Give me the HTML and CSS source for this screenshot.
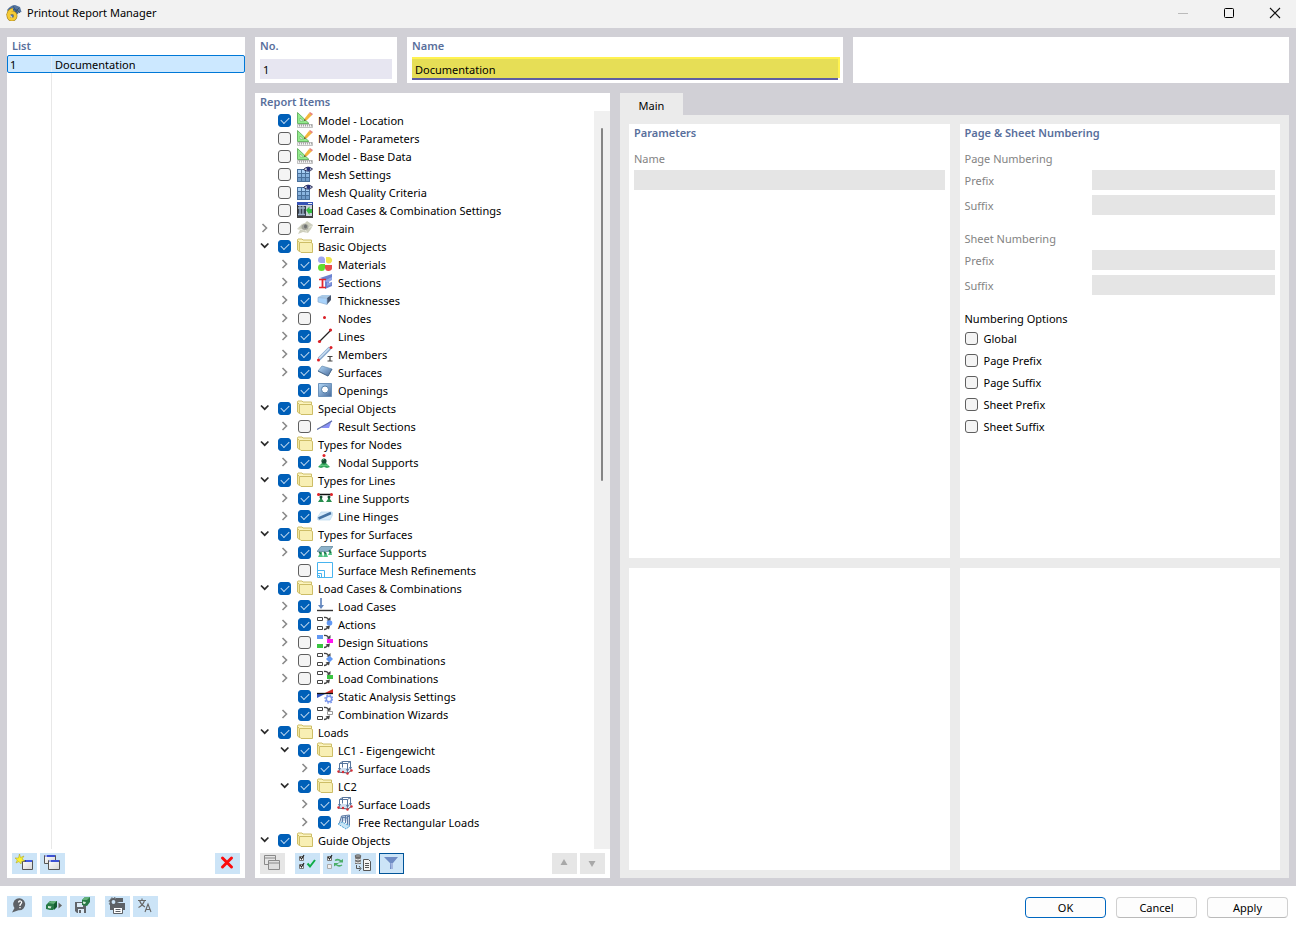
FILE: index.html
```html
<!DOCTYPE html>
<html lang="en">
<head>
<meta charset="UTF-8">
<meta name="viewport" content="width=device-width, initial-scale=1.0">
<title>Printout Report Manager</title>
<link rel="stylesheet" href="styles.css">
</head>
<body>

<!-- icon library -->
<svg class="sprite" aria-hidden="true">
  <defs>
    <linearGradient id="g-blue" x1="0" y1="0" x2="1" y2="1">
      <stop offset="0" stop-color="#b5dbfb"/><stop offset="1" stop-color="#46699a"/>
    </linearGradient>
    <linearGradient id="g-window" x1="0" y1="0" x2="1" y2="1">
      <stop offset="0" stop-color="#ffffff"/><stop offset="1" stop-color="#d4d4d4"/>
    </linearGradient>
  </defs>
  <symbol id="chevron-right" viewBox="0 0 10 10"><path d="M2.500 1l4 4-4 4" fill="none" stroke="#8a8a8a" stroke-width="1.600"/></symbol>
  <symbol id="chevron-down" viewBox="0 0 10 10"><path d="M1 2.500l3.700 3.700 3.700-3.700" fill="none" stroke="#2b2b2b" stroke-width="1.700"/></symbol>
  <symbol id="folder" viewBox="0 0 16 16">
    <path d="M2 4L.500 2.500V1.500L1 1h4l1 1h8.500V12" fill="#fbf3bd" stroke="#cdbd66"/>
    <path d="M2.500 4.500H14l1.500 1V14.500H4L2.500 13z" fill="#f8efb4" stroke="#cdbd66"/>
    <path d="M.500 2.500l2 2V13.500L.500 12z" fill="#f3e79f" stroke="#cdbd66"/>
  </symbol>
  <symbol id="model" viewBox="0 0 16 16">
    <path d="M.500.500L12 11.500H.500z" fill="#93ec8d" stroke="#6cb568"/>
    <path d="M3 6l3.500 3H3z" fill="#fff" stroke="#6cb568" stroke-width=".7"/>
    <path d="M7 9l1-3 4-5 3 2-5 5z" fill="#f3b73c"/><path d="M12 1l1-1 3 2-1.200 1.500z" fill="#e8837c"/><path d="M7 9l.6-2 1.400 1.200z" fill="#333"/>
    <path d="M.500 12.500h15v3H.500z" fill="#f2f2f2" stroke="#aaa" stroke-width=".7"/>
    <path d="M2.500 12.500v2m2-2v2m2-2v2m2-2v2m2-2v2m2-2v2m2-2v2" stroke="#888" stroke-width=".7"/>
  </symbol>
  <symbol id="mesh" viewBox="0 0 16 16">
    <path d="M0 3h13v13H0z" fill="#49709b"/>
    <path d="M1 4h3v3H1zM5 4h3v3H5zM9 4h3v3H9z" fill="#a9d0f5"/><path d="M1 8h3v3H1zM5 8h3v3H5zM9 8h3v3H9z" fill="#8ab5e0"/><path d="M1 12h3v3H1zM5 12h3v3H5zM9 12h3v3H9z" fill="#6f9bc9"/>
    <path d="M6.500 3.500Q11-1 15.500 3Q12 7 6.500 3.500z" fill="#dbe6f2" stroke="#2a2d55"/>
    <circle cx="11.500" cy="3" r="2" fill="#26317a"/>
  </symbol>
  <symbol id="lc-settings" viewBox="0 0 16 16">
    <path d="M.500.500h15v15H.500z" fill="#c9d0d8" stroke="#333"/><path d="M0 0h16v3H0z" fill="#3552b5"/><path d="M11 1h4v1h-4z" fill="#eee"/>
    <path d="M1 4h8v10H1z" fill="#37424f"/><path d="M3 4v9M6 4v9M1 12.500h7M1 6h7" stroke="#9fb4cb" stroke-width="1.300"/>
    <path d="M9 8l3.500-3.500V7H15v4h-2.500v2z" fill="#35bc41"/><path d="M0 14h16v2H0z" fill="#444"/>
  </symbol>
  <symbol id="terrain" viewBox="0 0 16 16">
    <path d="M0 9l5-5 3-1 2-2 6 4-2 4-3 4-5-1-5 2 2-4z" fill="#cdcebd"/><path d="M1 9l6 1 8-4M5 4l5 9" fill="none" stroke="#e7e7dc"/>
    <ellipse cx="8" cy="7" rx="3.500" ry="3" fill="#a3a49b"/><ellipse cx="8.500" cy="6.500" rx="1.500" ry="2" fill="#6e7070"/>
  </symbol>
  <symbol id="materials" viewBox="0 0 16 16">
    <path d="M1 4a3.600 3.600 0 0 1 7-1v4H4a3 3 0 0 1-3-3z" fill="#9fa7ee"/><path d="M9 1h3a3.300 3.300 0 1 1-3 5z" fill="#efe34d"/>
    <circle cx="4.500" cy="11.500" r="3.500" fill="#62dc2c"/><path d="M4 8h4v4H4z" fill="#62dc2c"/><path d="M8 9h7v2a3.500 3.500 0 0 1-7 1z" fill="#e94c4c"/>
  </symbol>
  <symbol id="sections" viewBox="0 0 16 16">
    <path d="M3 4l12-4v4l-3 1v4l3-1v4L8 15V6z" fill="#6c83d1"/><path d="M7 7l8-4v3l-5 3v3l5-2" fill="#91a5e4"/>
    <path d="M2 5.500h7M2 13.500h7" stroke="#e3262d" stroke-width="1.600"/><path d="M5.500 5v8" stroke="#e3262d" stroke-width="1.800"/>
  </symbol>
  <symbol id="thicknesses" viewBox="0 0 16 16">
    <path d="M1 5l4-2h9l-4 3H1z" fill="#a9c9e6"/><path d="M1 5.500l9 1v6L1 10z" fill="#a8d2fa"/><path d="M10 6l4-3v5l-4 4.500z" fill="#46566f"/><path d="M1 5.500l9 1v6L1 10z" fill="none" stroke="#8fb0d3" stroke-width=".7"/>
  </symbol>
  <symbol id="nodes" viewBox="0 0 16 16"><circle cx="7.500" cy="7.500" r="1.500" fill="#d91f26"/></symbol>
  <symbol id="lines" viewBox="0 0 16 16"><path d="M2 14L14 2" stroke="#222" stroke-width="1.300"/><circle cx="2.500" cy="13.500" r="1.600" fill="#dc1e25"/><circle cx="13.500" cy="2" r="1.600" fill="#dc1e25"/></symbol>
  <symbol id="members" viewBox="0 0 16 16">
    <path d="M2 13L13 2" stroke="#87a8cd" stroke-width="3.500"/><path d="M2 12.500L12.500 2" stroke="#cbdff2" stroke-width="1.500"/>
    <circle cx="1.500" cy="14" r="1.500" fill="#dc1e25"/><circle cx="14" cy="1.500" r="1.500" fill="#dc1e25"/><path d="M10.500 10.500h5M10.500 15h5M13 10v5" stroke="#444" stroke-width="1.200"/>
  </symbol>
  <symbol id="surfaces" viewBox="0 0 16 16"><path d="M5 2l10 3-4 7-10-5z" fill="url(#g-blue)" stroke="#678cae" stroke-width=".7"/><path d="M1 7l10 5 4-7" fill="none" stroke="#4c6b8e"/></symbol>
  <symbol id="openings" viewBox="0 0 16 16"><path d="M1.500 1.500h13v13h-13z" fill="url(#g-blue)" stroke="#6d93bb"/><circle cx="8" cy="7.500" r="3.500" fill="#fff" stroke="#517da8"/></symbol>
  <symbol id="result-sections" viewBox="0 0 16 16"><path d="M4 10l11-8-3 8z" fill="#8a91f7"/><path d="M0 11.500L15 3" stroke="#6170a7" stroke-width="1.300"/></symbol>
  <symbol id="nodal-supports" viewBox="0 0 16 16">
    <circle cx="7" cy="1.500" r="1.500" fill="#e12228"/><path d="M5 9h4l4 4-3 1-3-1-3 1-3-1z" fill="#2ea45a"/><circle cx="7" cy="7" r="2.600" fill="#174e35"/><path d="M5.500 6l1.500-1" stroke="#6dbd83"/><path d="M3 12l2-1 2 1 2-1 2 1" fill="none" stroke="#75d28e"/>
  </symbol>
  <symbol id="line-supports" viewBox="0 0 16 16">
    <path d="M1 4.500h14" stroke="#111" stroke-width="1.500"/><path d="M3 6h2v3l2 3H1l2-3zM11 6h2v3l2 3H9l2-3z" fill="#288d4d"/><circle cx="4" cy="7" r="1.500" fill="#174e35"/><circle cx="12" cy="7" r="1.500" fill="#174e35"/><circle cx="1.500" cy="4.500" r="1.500" fill="#e12228"/><circle cx="14.500" cy="4.500" r="1.500" fill="#e12228"/>
  </symbol>
  <symbol id="line-hinges" viewBox="0 0 16 16"><path d="M4 4h11l1 2-3 6H1l-1-2z" fill="#d8ecfb" stroke="#b9d8ee" stroke-width=".7"/><path d="M1.500 10.500L14 5" stroke="#4573a3" stroke-width="2.500"/></symbol>
  <symbol id="surface-supports" viewBox="0 0 16 16">
    <path d="M2 8h3v2l1 3H1l1.500-3zM7 8h2l2 5H6l1-2zM12 6h2l1 5h-4l1-2z" fill="#4fc083"/><path d="M4 2.500h12l-4 5H0z" fill="#8db2ca" stroke="#567f95" stroke-width=".7"/><path d="M2 8l2 2m3-2l2 2m3-4l2 3" stroke="#1f6b45" stroke-width="1.300"/>
  </symbol>
  <symbol id="mesh-refinements" viewBox="0 0 16 16"><path d="M.500.500h15v15H.500zM.500 8.500h7v7M.500 11.500h4v4M.500 13.500h2v2" fill="none" stroke="#48b4ef"/></symbol>
  <symbol id="load-cases" viewBox="0 0 16 16"><path d="M4 0v9" stroke="#7a99c9" stroke-width="2"/><path d="M1 7h6l-3 4z" fill="#6487bd"/><path d="M0 12.500h16" stroke="#333" stroke-width="1.400"/></symbol>
  <symbol id="flow" viewBox="0 0 16 16">
    <path d="M.500 1.500h5v3h-5zM.500 10.500h5v3h-5z" fill="#fff" stroke="#444"/>
    <path d="M7 1.500q4-.5 5 3.500M7 13.500q3 0 4-3" fill="none" stroke="#444" stroke-width="1.300"/><path d="M9.500 4.500h4V1zM8.500 10.500l4.500-1-1 4z" fill="#444"/>
  </symbol>
  <symbol id="actions" viewBox="0 0 16 16"><use href="#flow"/><circle cx="12.500" cy="7" r="2.800" fill="#6198f3"/></symbol>
  <symbol id="design-situations" viewBox="0 0 16 16"><use href="#flow"/><path d="M0 1h6v4H0z" fill="#6198f3"/><path d="M0 10h6v4H0z" fill="#39c440"/><path d="M10 5h6v4h-6z" fill="#ff15ef"/></symbol>
  <symbol id="action-combos" viewBox="0 0 16 16"><use href="#flow"/><path d="M12.500 3.500L16 7l-3.500 3.500L9 7z" fill="#6198f3"/></symbol>
  <symbol id="load-combos" viewBox="0 0 16 16"><use href="#flow"/><path d="M10 5h6v4h-6z" fill="#39c440"/></symbol>
  <symbol id="wizards" viewBox="0 0 16 16"><use href="#flow"/><path d="M10.500 5.500h5v3h-5z" fill="#fff" stroke="#999"/></symbol>
  <symbol id="static-analysis" viewBox="0 0 16 16">
    <path d="M8 5l8-4v4z" fill="#d42f2c"/><path d="M0 6h8L0 10z" fill="#3153bd"/><path d="M0 5.500h16" stroke="#111" stroke-width="1.300"/>
    <circle cx="12" cy="11" r="2.700" fill="#fff" stroke="#7a96ec" stroke-width="1.500"/><circle cx="12" cy="11" r="4" fill="none" stroke="#7a96ec" stroke-width="1.500" stroke-dasharray="1.600 1.540"/>
  </symbol>
  <symbol id="surface-loads" viewBox="0 0 16 16">
    <path d="M1 11l4-3h9l-3 4z" fill="#cfdff0"/><path d="M2.500 3.500h8v8M2.500 3.500v7M5.500 1.500h8v7M5.500 1.500v6M2.500 3.500l3-2M10.500 3.500l3-2" fill="none" stroke="#57759d"/>
    <path d="M1 8l1.500 3L4 8zM9 9l1.500 3L12 9zM12 7l1.500 3L15 7z" fill="#57759d"/><path d="M1 12l10 1 4-3" fill="none" stroke="#4b526d"/>
    <circle cx="1.500" cy="11.500" r="1.200" fill="#d52c34"/><circle cx="6" cy="12" r="1.200" fill="#d52c34"/><circle cx="10.500" cy="13.500" r="1.200" fill="#d52c34"/><circle cx="14.500" cy="10.500" r="1.200" fill="#d52c34"/>
  </symbol>
  <symbol id="free-loads" viewBox="0 0 16 16">
    <path d="M3 7l2-5 8-1v10l-2 1-2-6-4 2z" fill="#c5d4e6"/><path d="M2.500 9l2-7 8-1v10M5.500 3v6M8.500 2v7M10.500 2v10M4 3l6 1 3-3" fill="none" stroke="#5f7ca6"/>
    <path d="M1 10l4-2 8 4-4 3z" fill="#c7e4f5" stroke="#4ba3d7" stroke-dasharray="2 1"/>
  </symbol>
  <symbol id="new-window" viewBox="0 0 18 18"><path d="M7.500 6.500h10v9h-10z" fill="url(#g-window)" stroke="#555"/><path d="M8 6h9v2H8z" fill="#343f99"/><path d="M11 6h6v2h-6z" fill="#405be4"/><path d="M4.500 0l1 3.500L9 2 7 5l3 2-3.500.3L6 10 4 7.500 1 9l1.300-3L0 4h3.500z" fill="#faf230" stroke="#b6ad25" stroke-width=".6"/></symbol>
  <symbol id="copy-window" viewBox="0 0 18 18"><path d="M1.500 1.500h11v8h-11z" fill="url(#g-window)" stroke="#555"/><path d="M2 1h10v2H2z" fill="#3c51d3"/><path d="M5.500 6.500h11v9h-11z" fill="url(#g-window)" stroke="#555"/><path d="M6 6h10v2H6z" fill="#3c51d3"/><path d="M2 1.500h2v1H2zM6 6.500h2v1H6z" fill="#fff"/></symbol>
  <symbol id="copy-window-off" viewBox="0 0 18 18"><path d="M1.500 1.500h11v9h-11zM1.500 4h11" fill="#e6e6e6" stroke="#8a8a8a"/><path d="M5.500 6.500h11v9h-11zM5.500 9h11" fill="#ddd" stroke="#8a8a8a"/></symbol>
  <symbol id="delete" viewBox="0 0 18 18"><path d="M4.500 4l9 9M13.500 4l-9 9" stroke="#fb0c0c" stroke-width="3" stroke-linecap="round"/></symbol>
  <symbol id="check-all" viewBox="0 0 18 18"><path d="M1.500 2.500h4v4h-4zM1.500 10.500h4v4h-4z" fill="#fff" stroke="#777"/><path d="M2 3l1.500 2L6 1M2 11l1.500 2L6 9" fill="none" stroke="#222" stroke-width="1.200"/><path d="M9.500 9.500l2.500 3 5-6.500" fill="none" stroke="#10ad48" stroke-width="2"/></symbol>
  <symbol id="check-swap" viewBox="0 0 18 18"><path d="M1.500 2.500h4v4h-4z" fill="#fff" stroke="#777"/><path d="M2 3l1.500 2L6 1" fill="none" stroke="#222" stroke-width="1.200"/><path d="M1.500 10.500h4v4h-4z" fill="#eee" stroke="#aaa"/><path d="M9 6.500q3-2 6 .5M16 11q-3 2-6-.5" fill="none" stroke="#4cae68" stroke-width="1.500"/><path d="M17 5v3.500h-5zM8 12.500V9h5z" fill="#4cae68"/></symbol>
  <symbol id="db-report" viewBox="0 0 18 18"><path d="M1 2h6v8H1z" fill="#777"/><ellipse cx="4" cy="2" rx="3" ry="1.300" fill="#999" stroke="#555" stroke-width=".7"/><path d="M1 5q3 2 6 0M1 8q3 2 6 0" fill="none" stroke="#e3e3e3"/><path d="M2.500 11v3.500h4M5 12l2 2.500L5 17" fill="none" stroke="#555"/><path d="M9.500 5.500h5l2 2v9h-7zM11 9.500h4M11 11.500h4M11 13.500h4" fill="#f5f5f5" stroke="#555"/></symbol>
  <symbol id="filter" viewBox="0 0 18 18"><path d="M2 3h14l-5 6v6H8V9z" fill="#6f8cc4"/><path d="M8.500 9H11v6H9z" fill="#a2b5df"/></symbol>
  <symbol id="up" viewBox="0 0 18 18"><path d="M9 5l3.500 6h-7z" fill="#a8a8a8"/></symbol>
  <symbol id="down" viewBox="0 0 18 18"><path d="M9 13L5.500 7h7z" fill="#a8a8a8"/></symbol>
  <symbol id="help" viewBox="0 0 18 18"><path d="M2 15.500L4.500 11a6 6 0 1 1 4 2.200z" fill="#5d6166"/><path d="M8.500 5.500q.5-2 2-1.500 2 .8.500 2.700L10 8v1M10 10v1.200" fill="none" stroke="#fff" stroke-width="1.300"/></symbol>
  <symbol id="cube-next" viewBox="0 0 18 18"><path d="M1 8l4-4h7v5l-4 4-3 0-4-1z" fill="#277a46"/><path d="M3 6l3-2h6l-3 3z" fill="#65b27b"/><path d="M3 9l3.500.5-1 2-2.500-.5z" fill="#d7eedc"/><path d="M9 7l3-3v6l-3 3z" fill="#145c31"/><path d="M13.500 5.500L17 8.500l-3.500 3z" fill="#666"/></symbol>
  <symbol id="cube-save" viewBox="0 0 18 18"><path d="M2 5h11v11H4l-2-2z" fill="#60646a"/><path d="M4 6h6v4H4zM5 12h6v4H5z" fill="#dcebf7"/><path d="M6 13h2v3H6z" fill="#60646a"/><path d="M9 3l3-3h5v5l-3 4-5-1z" fill="#277a46"/><path d="M9 3l3-3h5l-3 3z" fill="#65b27b"/><path d="M10 4.500l3 .5-1 2-2-.5z" fill="#d7eedc"/></symbol>
  <symbol id="print-settings" viewBox="0 0 18 18"><path d="M8 1h7v4H8zM2 6h15v7h-3v-2H6v2H2z" fill="#5d6166"/><path d="M5.500 10.500h9v6h-9zM7.500 12.500h5M7.500 14.500h5" fill="#fff" stroke="#5d6166"/><circle cx="5.500" cy="5" r="2.900" fill="#cce4f7" stroke="#5d6166" stroke-width="2"/><circle cx="5.500" cy="5" r="4.400" fill="none" stroke="#5d6166" stroke-dasharray="1.800 1.650"/></symbol>
  <symbol id="translate" viewBox="0 0 18 18"><path d="M2 3.500h8M6 1.500v2M8.500 3.500Q7 8.500 2.500 10.500M3.500 3.500Q5 8 9 10" fill="none" stroke="#666" stroke-width="1.100"/><path d="M9 15l3-8 3 8M10 12.500h4" fill="none" stroke="#666" stroke-width="1.100"/></symbol>
</svg>

<header class="titlebar">
  <svg class="app-icon" viewBox="0 0 16 16">
    <path d="M1 5q4-5 8-5l5 2 1.500 5-4 1-1 5-3 1z" fill="#53749f"/><path d="M3 4l8 1 3 3M7 1l5 8M13 3l-6 6" fill="none" stroke="#34506f" stroke-width=".8"/>
    <path d="M7 4.500Q2.500 5.500 2 10.500" fill="none" stroke="#a07c12" stroke-width="3.600"/><circle cx="6" cy="11" r="3.600" fill="none" stroke="#a07c12" stroke-width="3.600"/>
    <path d="M7 4.500Q2.500 5.500 2.300 10.500" fill="none" stroke="#f5cb37" stroke-width="2.600"/><circle cx="6" cy="11" r="3.400" fill="none" stroke="#f5cb37" stroke-width="2.800"/>
  </svg>
  <h1>Printout Report Manager</h1>
  <div class="window-buttons">
    <button aria-label="Minimize" disabled><svg viewBox="0 0 12 12"><path d="M1 6.500h10" stroke="#bbb"/></svg></button>
    <button aria-label="Maximize"><svg viewBox="0 0 12 12"><rect x="1.500" y="1.500" width="9" height="9" rx="1" fill="none" stroke="#000"/></svg></button>
    <button aria-label="Close"><svg viewBox="0 0 12 12"><path d="M1 1l10 10M11 1L1 11" stroke="#111" stroke-width="1.100"/></svg></button>
  </div>
</header>

<main>
  <section class="panel list-panel">
    <h2>List</h2>
    <div class="list-body">
      <table>
        <tr><td class="list-no">1</td><td>Documentation</td></tr>
      </table>
    </div>
    <div class="toolbar">
      <button class="tool" aria-label="New"><svg><use href="#new-window"/></svg></button>
      <button class="tool" aria-label="Copy"><svg><use href="#copy-window"/></svg></button>
      <button class="tool push" aria-label="Delete"><svg><use href="#delete"/></svg></button>
    </div>
  </section>

  <div class="content">
    <div class="top-row">
      <section class="panel">
        <h2><label for="report-no">No.</label></h2>
        <input type="text" class="field no-field" id="report-no" value="1" readonly>
      </section>
      <section class="panel">
        <h2><label for="report-name">Name</label></h2>
        <input type="text" class="field name-field" id="report-name" value="Documentation">
      </section>
      <section class="panel"></section>
    </div>

    <div class="bottom-row">
      <section class="panel items-panel">
        <h2>Report Items</h2>
        <div class="tree-area">
          <ul class="tree">
            <li><label><input type="checkbox" checked><svg><use href="#model"/></svg>Model - Location</label></li>
            <li><label><input type="checkbox"><svg><use href="#model"/></svg>Model - Parameters</label></li>
            <li><label><input type="checkbox"><svg><use href="#model"/></svg>Model - Base Data</label></li>
            <li><label><input type="checkbox"><svg><use href="#mesh"/></svg>Mesh Settings</label></li>
            <li><label><input type="checkbox"><svg><use href="#mesh"/></svg>Mesh Quality Criteria</label></li>
            <li><label><input type="checkbox"><svg><use href="#lc-settings"/></svg>Load Cases &amp; Combination Settings</label></li>
            <li class="closed"><button aria-label="Expand"><svg><use href="#chevron-right"/></svg></button><label><input type="checkbox"><svg><use href="#terrain"/></svg>Terrain</label></li>
            <li class="open"><button aria-label="Collapse"><svg><use href="#chevron-down"/></svg></button><label><input type="checkbox" checked><svg><use href="#folder"/></svg>Basic Objects</label>
              <ul>
                <li class="closed"><button aria-label="Expand"><svg><use href="#chevron-right"/></svg></button><label><input type="checkbox" checked><svg><use href="#materials"/></svg>Materials</label></li>
                <li class="closed"><button aria-label="Expand"><svg><use href="#chevron-right"/></svg></button><label><input type="checkbox" checked><svg><use href="#sections"/></svg>Sections</label></li>
                <li class="closed"><button aria-label="Expand"><svg><use href="#chevron-right"/></svg></button><label><input type="checkbox" checked><svg><use href="#thicknesses"/></svg>Thicknesses</label></li>
                <li class="closed"><button aria-label="Expand"><svg><use href="#chevron-right"/></svg></button><label><input type="checkbox"><svg><use href="#nodes"/></svg>Nodes</label></li>
                <li class="closed"><button aria-label="Expand"><svg><use href="#chevron-right"/></svg></button><label><input type="checkbox" checked><svg><use href="#lines"/></svg>Lines</label></li>
                <li class="closed"><button aria-label="Expand"><svg><use href="#chevron-right"/></svg></button><label><input type="checkbox" checked><svg><use href="#members"/></svg>Members</label></li>
                <li class="closed"><button aria-label="Expand"><svg><use href="#chevron-right"/></svg></button><label><input type="checkbox" checked><svg><use href="#surfaces"/></svg>Surfaces</label></li>
                <li><label><input type="checkbox" checked><svg><use href="#openings"/></svg>Openings</label></li>
              </ul>
            </li>
            <li class="open"><button aria-label="Collapse"><svg><use href="#chevron-down"/></svg></button><label><input type="checkbox" checked><svg><use href="#folder"/></svg>Special Objects</label>
              <ul>
                <li class="closed"><button aria-label="Expand"><svg><use href="#chevron-right"/></svg></button><label><input type="checkbox"><svg><use href="#result-sections"/></svg>Result Sections</label></li>
              </ul>
            </li>
            <li class="open"><button aria-label="Collapse"><svg><use href="#chevron-down"/></svg></button><label><input type="checkbox" checked><svg><use href="#folder"/></svg>Types for Nodes</label>
              <ul>
                <li class="closed"><button aria-label="Expand"><svg><use href="#chevron-right"/></svg></button><label><input type="checkbox" checked><svg><use href="#nodal-supports"/></svg>Nodal Supports</label></li>
              </ul>
            </li>
            <li class="open"><button aria-label="Collapse"><svg><use href="#chevron-down"/></svg></button><label><input type="checkbox" checked><svg><use href="#folder"/></svg>Types for Lines</label>
              <ul>
                <li class="closed"><button aria-label="Expand"><svg><use href="#chevron-right"/></svg></button><label><input type="checkbox" checked><svg><use href="#line-supports"/></svg>Line Supports</label></li>
                <li class="closed"><button aria-label="Expand"><svg><use href="#chevron-right"/></svg></button><label><input type="checkbox" checked><svg><use href="#line-hinges"/></svg>Line Hinges</label></li>
              </ul>
            </li>
            <li class="open"><button aria-label="Collapse"><svg><use href="#chevron-down"/></svg></button><label><input type="checkbox" checked><svg><use href="#folder"/></svg>Types for Surfaces</label>
              <ul>
                <li class="closed"><button aria-label="Expand"><svg><use href="#chevron-right"/></svg></button><label><input type="checkbox" checked><svg><use href="#surface-supports"/></svg>Surface Supports</label></li>
                <li><label><input type="checkbox"><svg><use href="#mesh-refinements"/></svg>Surface Mesh Refinements</label></li>
              </ul>
            </li>
            <li class="open"><button aria-label="Collapse"><svg><use href="#chevron-down"/></svg></button><label><input type="checkbox" checked><svg><use href="#folder"/></svg>Load Cases &amp; Combinations</label>
              <ul>
                <li class="closed"><button aria-label="Expand"><svg><use href="#chevron-right"/></svg></button><label><input type="checkbox" checked><svg><use href="#load-cases"/></svg>Load Cases</label></li>
                <li class="closed"><button aria-label="Expand"><svg><use href="#chevron-right"/></svg></button><label><input type="checkbox" checked><svg><use href="#actions"/></svg>Actions</label></li>
                <li class="closed"><button aria-label="Expand"><svg><use href="#chevron-right"/></svg></button><label><input type="checkbox"><svg><use href="#design-situations"/></svg>Design Situations</label></li>
                <li class="closed"><button aria-label="Expand"><svg><use href="#chevron-right"/></svg></button><label><input type="checkbox"><svg><use href="#action-combos"/></svg>Action Combinations</label></li>
                <li class="closed"><button aria-label="Expand"><svg><use href="#chevron-right"/></svg></button><label><input type="checkbox"><svg><use href="#load-combos"/></svg>Load Combinations</label></li>
                <li><label><input type="checkbox" checked><svg><use href="#static-analysis"/></svg>Static Analysis Settings</label></li>
                <li class="closed"><button aria-label="Expand"><svg><use href="#chevron-right"/></svg></button><label><input type="checkbox" checked><svg><use href="#wizards"/></svg>Combination Wizards</label></li>
              </ul>
            </li>
            <li class="open"><button aria-label="Collapse"><svg><use href="#chevron-down"/></svg></button><label><input type="checkbox" checked><svg><use href="#folder"/></svg>Loads</label>
              <ul>
                <li class="open"><button aria-label="Collapse"><svg><use href="#chevron-down"/></svg></button><label><input type="checkbox" checked><svg><use href="#folder"/></svg>LC1 - Eigengewicht</label>
                  <ul>
                    <li class="closed"><button aria-label="Expand"><svg><use href="#chevron-right"/></svg></button><label><input type="checkbox" checked><svg><use href="#surface-loads"/></svg>Surface Loads</label></li>
                  </ul>
                </li>
                <li class="open"><button aria-label="Collapse"><svg><use href="#chevron-down"/></svg></button><label><input type="checkbox" checked><svg><use href="#folder"/></svg>LC2</label>
                  <ul>
                    <li class="closed"><button aria-label="Expand"><svg><use href="#chevron-right"/></svg></button><label><input type="checkbox" checked><svg><use href="#surface-loads"/></svg>Surface Loads</label></li>
                    <li class="closed"><button aria-label="Expand"><svg><use href="#chevron-right"/></svg></button><label><input type="checkbox" checked><svg><use href="#free-loads"/></svg>Free Rectangular Loads</label></li>
                  </ul>
                </li>
              </ul>
            </li>
            <li class="open"><button aria-label="Collapse"><svg><use href="#chevron-down"/></svg></button><label><input type="checkbox" checked><svg><use href="#folder"/></svg>Guide Objects</label></li>
          </ul>
          <div class="scrollbar"><div class="thumb"></div></div>
        </div>
        <div class="toolbar">
          <button class="tool off" aria-label="Copy item" disabled><svg><use href="#copy-window-off"/></svg></button>
          <button class="tool group-start" aria-label="Check all"><svg><use href="#check-all"/></svg></button>
          <button class="tool" aria-label="Invert checks"><svg><use href="#check-swap"/></svg></button>
          <button class="tool" aria-label="Load into report"><svg><use href="#db-report"/></svg></button>
          <button class="tool active" aria-label="Filter"><svg><use href="#filter"/></svg></button>
          <button class="tool off push" aria-label="Move up" disabled><svg><use href="#up"/></svg></button>
          <button class="tool off" aria-label="Move down" disabled><svg><use href="#down"/></svg></button>
        </div>
      </section>

      <div class="tabs">
        <button class="tab">Main</button>
        <div class="tab-body">
          <section class="panel">
            <h2>Parameters</h2>
            <div class="group">
              <label class="group-title" for="param-name">Name</label>
              <input type="text" class="field" id="param-name" disabled>
            </div>
          </section>
          <section class="panel">
            <h2>Page &amp; Sheet Numbering</h2>
            <div class="group">
              <div class="group-title">Page Numbering</div>
              <div class="field-grid">
                <label for="page-prefix">Prefix</label><input type="text" class="field" id="page-prefix" disabled>
                <label for="page-suffix">Suffix</label><input type="text" class="field" id="page-suffix" disabled>
              </div>
            </div>
            <div class="group">
              <div class="group-title">Sheet Numbering</div>
              <div class="field-grid">
                <label for="sheet-prefix">Prefix</label><input type="text" class="field" id="sheet-prefix" disabled>
                <label for="sheet-suffix">Suffix</label><input type="text" class="field" id="sheet-suffix" disabled>
              </div>
            </div>
            <div class="group options">
              <div>Numbering Options</div>
              <label><input type="checkbox">Global</label>
              <label><input type="checkbox">Page Prefix</label>
              <label><input type="checkbox">Page Suffix</label>
              <label><input type="checkbox">Sheet Prefix</label>
              <label><input type="checkbox">Sheet Suffix</label>
            </div>
          </section>
          <section class="panel"></section>
          <section class="panel"></section>
        </div>
      </div>
    </div>
  </div>
</main>

<footer>
  <button class="tool" aria-label="Help"><svg><use href="#help"/></svg></button>
  <button class="tool group-start" aria-label="Load template"><svg><use href="#cube-next"/></svg></button>
  <button class="tool" aria-label="Save template"><svg><use href="#cube-save"/></svg></button>
  <button class="tool group-start" aria-label="Print settings"><svg><use href="#print-settings"/></svg></button>
  <button class="tool" aria-label="Language"><svg><use href="#translate"/></svg></button>
  <div class="dialog-buttons">
    <button class="default">OK</button>
    <button>Cancel</button>
    <button>Apply</button>
  </div>
</footer>

</body>
</html>
```
FILE: styles.css
```css
* {
  box-sizing: border-box;
}
body {
  margin: 0;
  height: 100vh;
  display: flex;
  flex-direction: column;
  background: #fff;
  color: #000;
  font-family: 'Noto Sans', 'Open Sans', sans-serif;
  font-size: 11px;
  line-height: 18px;
}
button, input {
  font: inherit;
  color: inherit;
  margin: 0;
}
button {
  padding: 0;
  border: none;
  background: none;
}
svg {
  display: block;
  flex: none;
}
.sprite {
  position: absolute;
  width: 0;
  height: 0;
}

/* title bar */
.titlebar {
  display: flex;
  align-items: center;
  height: 28px;
  padding-left: 6px;
  padding-bottom: 2px;
  background: #f2f2f2;
}
.app-icon {
  width: 16px;
  height: 16px;
}
h1 {
  margin: 0 0 0 5px;
  font-size: 11px;
  font-weight: normal;
}
.window-buttons {
  display: flex;
  gap: 4px;
  margin-left: auto;
}
.window-buttons button {
  display: flex;
  align-items: center;
  justify-content: center;
  width: 42px;
  height: 26px;
}
.window-buttons svg {
  width: 12px;
  height: 12px;
}

/* panels */
main {
  flex: 1;
  min-height: 0;
  display: flex;
  gap: 10px;
  padding: 9px 7px 8px;
  background: #d1d0d6;
}
.panel {
  background: #fff;
  min-width: 0;
}
h2 {
  margin: 0;
  padding: 0 5px;
  height: 18px;
  font-size: 11px;
  font-weight: 600;
  color: #596f9c;
}
.list-panel {
  display: flex;
  flex-direction: column;
  flex: none;
  width: 238px;
}
.list-body {
  flex: 1;
  background: linear-gradient(to right, #fff 44px, #e8e8e8 44px, #e8e8e8 45px, #fff 45px);
}
.list-body table {
  width: 100%;
  border: 1px solid #0078d7;
  border-radius: 2px;
  border-spacing: 0;
  background: #cce8ff;
  line-height: 14px;
}
.list-body td {
  padding: 2px 3px 0;
}
.list-body .list-no {
  width: 44px;
  padding: 2px 2px 0;
  border-right: 1px solid #e4eef7;
}
.content {
  flex: 1;
  min-width: 0;
  display: flex;
  flex-direction: column;
  gap: 10px;
}
.top-row {
  display: grid;
  grid-template-columns: 142px 1fr 1fr;
  gap: 10px;
  height: 46px;
}
.top-row .panel {
  display: flex;
  flex-direction: column;
}
.bottom-row {
  flex: 1;
  min-height: 0;
  display: flex;
  gap: 10px;
}

/* fields */
.field {
  display: block;
  width: 100%;
  min-width: 0;
  height: 20px;
  padding: 0 3px;
  border: none;
  border-radius: 0;
  background: #e5e5e5;
}
.no-field, .name-field {
  width: auto;
  margin: 4px 5px 0;
  padding-top: 1px;
}
.no-field {
  background: #e7e6f1;
}
.name-field {
  height: 21px;
  padding-top: 2px;
  border-bottom: 2px solid #5f5fa3;
  background: #e6de56;
  box-shadow: 0 -2px #fff250, 2px -2px #fff250;
  outline: none;
}
input[type="checkbox"] {
  appearance: none;
  flex: none;
  width: 13px;
  height: 13px;
  margin-bottom: 1px;
  border: 1px solid #5f5f5f;
  border-radius: 3px;
  background: #f4f4f4;
}
input[type="checkbox"]:checked {
  display: grid;
  place-items: center;
  border-color: #005fb8;
  background: #005fb8;
}
input[type="checkbox"]:checked::before {
  content: '';
  width: 7px;
  height: 4px;
  border: solid #c3daf0;
  border-width: 0 0 1px 1px;
  transform: translateY(-1px) rotate(-45deg);
}

/* report items */
.items-panel {
  display: flex;
  flex-direction: column;
  flex: none;
  width: 355px;
}
.tree-area {
  flex: 1;
  min-height: 0;
  display: flex;
  overflow: hidden;
}
.tree, .tree ul {
  list-style: none;
  margin: 0;
  padding: 0;
}
.tree {
  flex: 1;
  padding-top: 1px;
}
.tree li {
  display: grid;
  grid-template-columns: 20px 1fr;
}
.tree li > button {
  display: flex;
  align-items: center;
  justify-content: center;
  height: 16px;
}
.tree button svg {
  width: 10px;
  height: 10px;
}
.tree label {
  grid-column: 2;
  display: flex;
  align-items: center;
  height: 18px;
  padding-left: 3px;
  white-space: nowrap;
}
.tree label svg {
  width: 16px;
  height: 16px;
  margin: 0 5px 2px 6px;
}
.tree ul {
  grid-column: 2;
}
.scrollbar {
  width: 16px;
  padding: 17px 0 0 7px;
  background: #f0f0f0;
}
.thumb {
  width: 2px;
  height: 49%;
  border-radius: 1px;
  background: #858585;
}

/* tool buttons */
.toolbar {
  display: flex;
  gap: 3px;
  padding: 4px 5px;
}
.tool {
  display: flex;
  align-items: center;
  justify-content: center;
  width: 25px;
  height: 21px;
  padding: 0 1px 1px 0;
  background: #cce4f7;
}
.tool svg {
  width: 18px;
  height: 18px;
}
.tool.off {
  background: #e6e6e6;
}
.tool.active {
  border: 1px solid #005499;
}
.group-start {
  margin-left: 7px;
}
.push {
  margin-left: auto;
}

/* tab area */
.tabs {
  flex: 1;
  min-width: 0;
  display: flex;
  flex-direction: column;
  align-items: flex-start;
}
.tab {
  width: 63px;
  height: 22px;
  padding-top: 4px;
  background: #ebebeb;
}
.tab-body {
  flex: 1;
  width: 100%;
  display: grid;
  grid-template-columns: 1fr 1fr;
  grid-template-rows: 59fr 41fr;
  gap: 10px;
  padding: 9px 9px 8px;
  background: #ebebeb;
}
.group {
  padding: 8px 5px 7px;
  color: #838383;
}
.group-title {
  display: block;
  margin-bottom: 2px;
}
.field-grid {
  display: grid;
  grid-template-columns: 127px 1fr;
  gap: 5px 0;
  line-height: 22px;
}
.field-grid label {
  height: 20px;
}
.options {
  color: #000;
}
.options label {
  display: flex;
  align-items: center;
  gap: 6px;
  height: 22px;
}

/* bottom bar */
footer {
  display: flex;
  gap: 3px;
  padding: 10px 8px 8px 7px;
}
.dialog-buttons {
  display: flex;
  gap: 10px;
  margin-left: auto;
  padding-top: 1px;
}
.dialog-buttons button {
  width: 81px;
  height: 21px;
  border: 1px solid #d0d0d0;
  border-bottom-color: #bababa;
  border-radius: 4px;
  background: #fdfdfd;
}
.dialog-buttons .default {
  border-color: #0067c0;
}
```
